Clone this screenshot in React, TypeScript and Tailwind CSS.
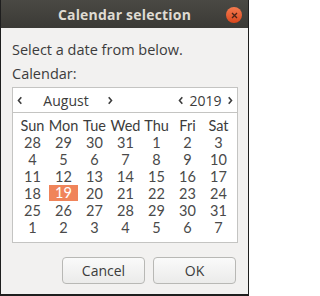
import React from "react";

const weeks = [
  ["28", "29", "30", "31", "1", "2", "3"],
  ["4", "5", "6", "7", "8", "9", "10"],
  ["11", "12", "13", "14", "15", "16", "17"],
  ["18", "19", "20", "21", "22", "23", "24"],
  ["25", "26", "27", "28", "29", "30", "31"],
  ["1", "2", "3", "4", "5", "6", "7"],
];
const days = ["Sun", "Mon", "Tue", "Wed", "Thu", "Fri", "Sat"];

function Chev({ dir }: { dir: "l" | "r" }) {
  return (
    <svg width="6" height="9" viewBox="0 0 6 9" className="block">
      <path
        d={dir === "l" ? "M4.3 1.2 L1.5 4.5 L4.3 7.8" : "M1.7 1.2 L4.5 4.5 L1.7 7.8"}
        fill="none"
        stroke="#3c3c3c"
        strokeWidth="1.6"
      />
    </svg>
  );
}

export default function App() {
  return (
    <div
      className="w-[249px] h-[296px] flex flex-col bg-[#f2f1f0] border-x border-b-2 border-[#1e1e1e] text-[#3c3c3c] overflow-hidden"
      style={{ fontFamily: '"Open Sans", "Noto Sans", sans-serif' }}
    >
      <div className="h-[28px] shrink-0 relative flex items-center justify-center bg-gradient-to-b from-[#4a4944] to-[#3b3a36]">
        <span className="text-[14px] font-bold text-[#dfdbd2] tracking-[0.2px]">Calendar selection</span>
        <div className="absolute right-[6px] top-[7px] w-[16px] h-[16px] rounded-full bg-gradient-to-b from-[#f47a4e] to-[#d9461a] flex items-center justify-center">
          <svg width="7" height="7" viewBox="0 0 7 7">
            <path d="M1 1 L6 6 M6 1 L1 6" stroke="#4a2418" strokeWidth="1.3" />
          </svg>
        </div>
      </div>
      <div className="flex flex-col px-[11px]">
        <div className="mt-[13px] h-[18px] leading-[18px] text-[14.5px]">Select a date from below.</div>
        <div className="mt-[6px] h-[18px] leading-[18px] text-[14.5px]">Calendar:</div>
        <div className="mt-[4px] w-[226px] h-[156px] border border-[#c4c4c2] bg-white flex flex-col">
          <div className="h-[25px] shrink-0 border-b border-[#c4c4c2] flex items-center text-[14px] pr-[2px]">
            <div className="w-[14px] flex justify-center"><Chev dir="l" /></div>
            <div className="w-[78px] text-center">August</div>
            <div className="w-[9px] flex justify-center"><Chev dir="r" /></div>
            <div className="flex-1" />
            <div className="w-[10px] flex justify-center"><Chev dir="l" /></div>
            <div className="w-[39px] text-center">2019</div>
            <div className="w-[10px] flex justify-center"><Chev dir="r" /></div>
          </div>
          <div
            className="grid grid-cols-7 w-[217px] ml-[4px] mt-[4px] text-[14.5px]"
            style={{ fontFamily: "Lato, sans-serif" }}
          >
            {days.map((d) => (
              <div key={d} className="h-[17px] leading-[17px] text-center">{d}</div>
            ))}
            {weeks.map((w, i) =>
              w.map((n, j) => {
                const sel = i === 3 && j === 1;
                return (
                  <div key={i + "-" + j} className="h-[17px] flex justify-center">
                    <div
                      className={
                        sel
                          ? "w-[29px] h-[16px] leading-[16px] text-center bg-[#f0845a] text-white"
                          : "leading-[17px] text-center text-[#4a4a4a]"
                      }
                    >
                      {n}
                    </div>
                  </div>
                );
              })
            )}
          </div>
        </div>
        <div className="mt-[14px] flex justify-end gap-[8px] pr-[1px]">
          <button className="w-[83px] h-[27px] rounded-[4px] border border-[#b8b8b5] bg-gradient-to-b from-[#fafafa] to-[#ebebea] text-[14px] text-[#3c3c3c]">Cancel</button>
          <button className="w-[83px] h-[27px] rounded-[4px] border border-[#b8b8b5] bg-gradient-to-b from-[#fafafa] to-[#ebebea] text-[14px] text-[#3c3c3c]">OK</button>
        </div>
      </div>
    </div>
  );
}
